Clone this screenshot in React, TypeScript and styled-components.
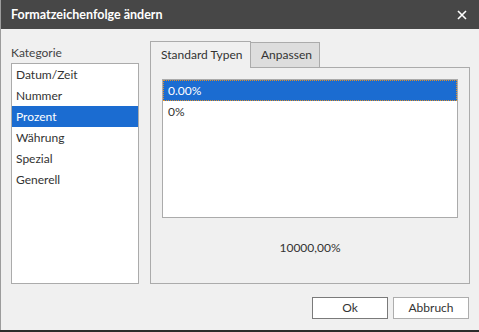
import styled, { createGlobalStyle } from "styled-components";

const GlobalStyle = createGlobalStyle`
  html, body {
    margin: 0;
    padding: 0;
    background: #2b2b2b;
  }
  body {
    font-family: Lato, "Noto Sans", "Liberation Sans", sans-serif;
    font-size: 12px;
    color: #333333;
  }
`;

const categories = ["Datum/Zeit", "Nummer", "Prozent", "Währung", "Spezial", "Generell"];
const types = ["0.00%", "0%"];

export default function App() {
  return (
    <>
      <GlobalStyle />
      <Dialog>
        <TitleBar>
          <span>Formatzeichenfolge ändern</span>
          <CloseButton aria-label="Schließen">
            <svg width="10" height="10" viewBox="0 0 10 10">
              <path d="M1 1 L9 9 M9 1 L1 9" stroke="#ffffff" strokeWidth="1.6" />
            </svg>
          </CloseButton>
        </TitleBar>
        <Content>
          <LeftColumn>
            <Label>Kategorie</Label>
            <ListBox>
              {categories.map((c) => (
                <ListItem key={c} $selected={c === "Prozent"}>
                  {c}
                </ListItem>
              ))}
            </ListBox>
          </LeftColumn>
          <RightColumn>
            <TabStrip>
              <Tab $active>Standard Typen</Tab>
              <Tab>Anpassen</Tab>
            </TabStrip>
            <TabPanel>
              <TypeList>
                {types.map((t, i) => (
                  <TypeItem key={t} $selected={i === 0}>
                    {t}
                  </TypeItem>
                ))}
              </TypeList>
              <Preview>10000,00%</Preview>
            </TabPanel>
          </RightColumn>
        </Content>
        <Footer>
          <Button $default>Ok</Button>
          <Button>Abbruch</Button>
        </Footer>
      </Dialog>
    </>
  );
}

const Dialog = styled.div`
  display: flex;
  flex-direction: column;
  width: 478px;
  height: 330px;
  background: #f0f0f0;
  border-left: 1px solid #9c9c9c;
`;

const TitleBar = styled.div`
  display: flex;
  align-items: center;
  justify-content: space-between;
  height: 29px;
  padding: 0 10px 0 10px;
  background: #474747;
  color: #ffffff;
  font-weight: 700;
  font-size: 12.5px;
`;

const CloseButton = styled.div`
  display: flex;
  align-items: center;
  justify-content: center;
  width: 12px;
  height: 12px;
  margin-right: 1px;
`;

const Content = styled.div`
  display: flex;
  gap: 11px;
  padding: 13px 9px 0 10px;
  height: 242px;
`;

const LeftColumn = styled.div`
  display: flex;
  flex-direction: column;
  width: 128px;
`;

const Label = styled.div`
  margin-top: 3px;
  margin-bottom: 3px;
  line-height: 15px;
  color: #444444;
`;

const ListBox = styled.div`
  flex: 1;
  background: #ffffff;
  border: 1px solid #ababab;
`;

const ListItem = styled.div<{ $selected?: boolean }>`
  height: 21px;
  line-height: 21px;
  padding-left: 4px;
  background: ${(p) => (p.$selected ? "#1b6cd1" : "transparent")};
  color: ${(p) => (p.$selected ? "#ffffff" : "#333333")};
`;

const RightColumn = styled.div`
  display: flex;
  flex-direction: column;
  flex: 1;
`;

const TabStrip = styled.div`
  display: flex;
  align-items: flex-end;
  height: 26px;
  margin-bottom: -1px;
  position: relative;
  z-index: 1;
`;

const Tab = styled.div<{ $active?: boolean }>`
  box-sizing: border-box;
  width: ${(p) => (p.$active ? "101px" : "70px")};
  height: ${(p) => (p.$active ? "27px" : "26px")};
  padding: 0 10px;
  margin-left: ${(p) => (p.$active ? "0" : "-1px")};
  line-height: ${(p) => (p.$active ? "26px" : "24px")};
  white-space: nowrap;
  border: 1px solid #ababab;
  border-bottom: ${(p) => (p.$active ? "none" : "1px solid #ababab")};
  background: ${(p) => (p.$active ? "#f0f0f0" : "#dddddd")};
  color: #333333;
`;

const TabPanel = styled.div`
  flex: 1;
  display: flex;
  flex-direction: column;
  border: 1px solid #ababab;
  padding: 11px 11px 0 11px;
`;

const TypeList = styled.div`
  height: 137px;
  background: #ffffff;
  border: 1px solid #ababab;
`;

const TypeItem = styled.div<{ $selected?: boolean }>`
  box-sizing: border-box;
  height: 21px;
  line-height: 21px;
  padding-left: 5px;
  background: ${(p) => (p.$selected ? "#1b6cd1" : "transparent")};
  color: ${(p) => (p.$selected ? "#ffffff" : "#333333")};
  outline: ${(p) => (p.$selected ? "1px dotted #e0902a" : "none")};
  outline-offset: -1px;
`;

const Preview = styled.div`
  margin-top: 22px;
  text-align: center;
  line-height: 15px;
  color: #333333;
`;

const Footer = styled.div`
  display: flex;
  justify-content: flex-end;
  gap: 5px;
  padding: 13px 10px 0 0;
`;

const Button = styled.div<{ $default?: boolean }>`
  box-sizing: border-box;
  width: 76px;
  height: 22px;
  line-height: 20px;
  text-align: center;
  background: #ffffff;
  border: 1px solid ${(p) => (p.$default ? "#7a7a7a" : "#adadad")};
  color: #333333;
`;
